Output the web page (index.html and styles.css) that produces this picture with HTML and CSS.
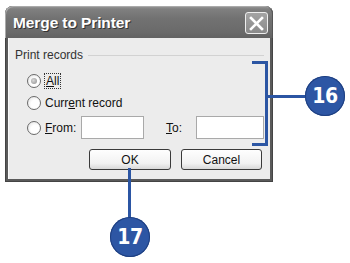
FILE: index.html
```html
<!DOCTYPE html>
<html>
<head>
<meta charset="utf-8">
<link rel="stylesheet" href="styles.css">
</head>
<body>
<div class="stage">
  <div class="dialog">
    <div class="titlebar">
      <span class="title">Merge to Printer</span>
      <span class="close">
        <svg width="15" height="15" viewBox="0 0 15 15"><path d="M2 2 L13 13 M13 2 L2 13" stroke="#fff" stroke-width="2.6" stroke-linecap="square"/></svg>
      </span>
    </div>
    <div class="body">
      <div class="group">
        <span class="legend">Print records</span>
        <span class="rule"></span>
      </div>
      <div class="row r1">
        <span class="radio checked"><span class="dot"></span></span>
        <span class="label focus"><u>A</u>ll</span>
      </div>
      <div class="row r2">
        <span class="radio"></span>
        <span class="label">Curr<u>e</u>nt record</span>
      </div>
      <div class="row r3">
        <span class="radio"></span>
        <span class="label from"><u>F</u>rom:</span>
        <span class="input in1"></span>
        <span class="label to"><u>T</u>o:</span>
        <span class="input in2"></span>
      </div>
      <div class="buttons">
        <span class="btn ok">OK</span>
        <span class="btn cancel">Cancel</span>
      </div>
    </div>
  </div>

  <div class="bracket"></div>
  <div class="bracket-line"></div>
  <div class="callout c16">16</div>
  <div class="ok-line"></div>
  <div class="callout c17">17</div>
</div>
</body>
</html>
```

FILE: styles.css
```css
html, body {
  margin: 0;
  padding: 0;
  background: #fff;
}
.stage {
  position: relative;
  width: 350px;
  height: 263px;
  overflow: hidden;
  font-family: "Liberation Sans", Arial, sans-serif;
}
.dialog {
  margin: 6px 0 0 5px;
  width: 268px;
  height: 176px;
  display: flex;
  flex-direction: column;
  background: #5a5a5a;
  border-radius: 8px 8px 0 0;
  box-sizing: border-box;
  padding: 0 3px 3px 3px;
  box-shadow: inset 0 0 0 1px #444;
}
.titlebar {
  height: 32px;
  margin: 0 -3px;
  padding: 0 5px 0 8px;
  display: flex;
  align-items: center;
  justify-content: space-between;
  border-radius: 8px 8px 0 0;
  background: linear-gradient(#9a9a9a 0px, #808080 3px, #727272 12px, #6a6a6a 26px, #626262 32px);
  box-shadow: inset 1px 1px 0 #aaa, inset -1px 0 0 #555;
}
.title {
  color: #fff;
  font-family: "Liberation Sans", Arial, sans-serif;
  font-weight: bold;
  font-size: 15.5px;
  letter-spacing: -0.1px;
  text-shadow: 1px 1px 0 #333;
  margin-top: 1px;
}
.close {
  width: 21px;
  height: 20px;
  border: 1px solid #eee;
  border-radius: 3px;
  background: linear-gradient(#a4a4a4, #8a8a8a);
  display: flex;
  align-items: center;
  justify-content: center;
  margin-top: 2px;
}
.body {
  flex: 1;
  background: #ececec;
  position: relative;
  box-shadow: inset 1px 0 0 #fafafa;
  font-size: 12px;
  color: #111;
}
.group {
  display: flex;
  align-items: center;
  margin: 10px 6px 0 7px;
  height: 14px;
}
.legend {
  color: #333;
  padding-right: 5px;
}
.rule {
  flex: 1;
  height: 1px;
  background: #d2d2d2;
  margin-top: 1px;
}
.row {
  display: flex;
  align-items: center;
  margin-left: 19px;
}
.r1 { margin-top: 9px; height: 20px; }
.r2 { margin-top: 2px; height: 20px; }
.r3 { margin-top: 3px; height: 23px; }
.radio {
  width: 12px;
  height: 12px;
  border-radius: 50%;
  border: 1px solid #6a6a6a;
  background: radial-gradient(circle at 60% 60%, #fff 40%, #dcdcdc);
  display: flex;
  align-items: center;
  justify-content: center;
  margin-right: 4px;
  flex: none;
}
.dot {
  width: 6px;
  height: 6px;
  border-radius: 50%;
  background: radial-gradient(circle at 40% 40%, #d8d8d8, #8c8c8c);
}
.label { line-height: 14px; }
.focus {
  outline: 1px dotted #333;
  outline-offset: 0;
  padding: 0 1px;
}
.from { width: 36px; flex: none; }
.to { width: 30px; margin-left: 22px; flex: none; }
.input {
  height: 21px;
  background: #fff;
  border: 1px solid #a9a9a9;
  flex: none;
}
.in1 { width: 61px; }
.in2 { width: 66px; }
.buttons {
  display: flex;
  margin: 10px 0 0 81px;
  gap: 10px;
}
.btn {
  height: 19px;
  border: 1px solid #3a3a3a;
  border-radius: 3px;
  background: linear-gradient(#fefefe, #f2f2f2 70%, #d8d8d8);
  display: flex;
  align-items: center;
  justify-content: center;
  box-sizing: content-box;
}
.ok { width: 80px; }
.cancel { width: 79px; }

/* Callouts (annotation overlay) */
.bracket {
  position: absolute;
  left: 252px;
  top: 61px;
  width: 13px;
  height: 79px;
  border: 3px solid #2b55a3;
  border-left: none;
}
.bracket-line {
  position: absolute;
  left: 268px;
  top: 95px;
  width: 38px;
  height: 3px;
  background: #2b55a3;
}
.callout {
  position: absolute;
  width: 40px;
  height: 40px;
  border-radius: 50%;
  background: #2d56a4;
  box-shadow: inset 0 0 0 1px #1e3f80;
  color: #fff;
  font-family: "DejaVu Sans Condensed", "DejaVu Sans", sans-serif;
  font-weight: bold;
  font-size: 21px;
  display: flex;
  align-items: center;
  justify-content: center;
  letter-spacing: -0.5px;
}
.c16 { left: 305px; top: 76px; }
.c17 { left: 110px; top: 217px; }
.ok-line {
  position: absolute;
  left: 128px;
  top: 168px;
  width: 3px;
  height: 50px;
  background: #2b55a3;
}
```
